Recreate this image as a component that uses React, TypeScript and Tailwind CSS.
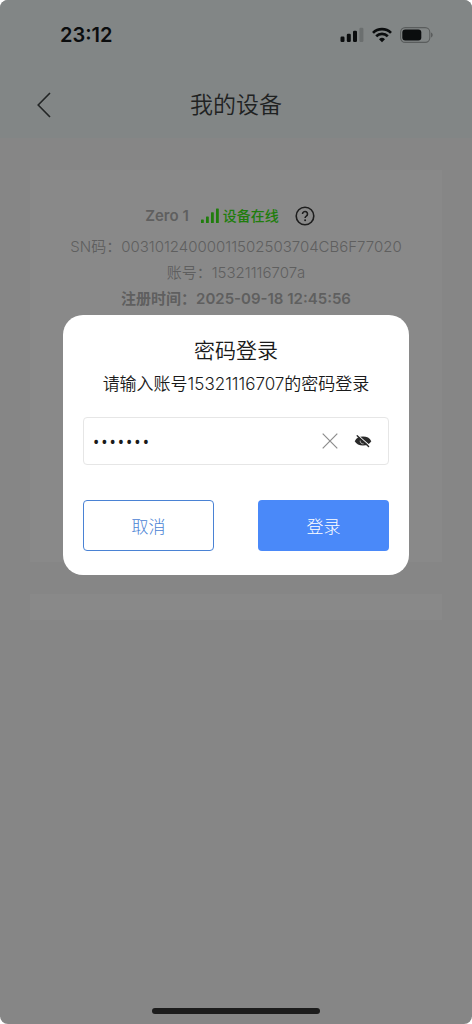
import { useState } from 'react';

function SignalIcon() {
  return (
    <svg width="24" height="16" viewBox="0 0 24 16" fill="#0b0d0e">
      <rect x="0.5" y="9.5" width="4" height="5.5" rx="1.2" />
      <rect x="6.8" y="6.8" width="4" height="8.2" rx="1.2" />
      <rect x="13" y="3.8" width="4" height="11.2" rx="1.2" />
      <rect x="19.4" y="0.8" width="4" height="14.2" rx="1.2" fill="#6b6f6f" />
    </svg>
  );
}

function WifiIcon() {
  return (
    <svg width="20" height="16" viewBox="0 0 20 16" fill="none" stroke="#0b0d0e" strokeWidth="2.7">
      <path d="M1 5.9a12.8 12.8 0 0 1 18 0" />
      <path d="M4.2 9.3a8.3 8.3 0 0 1 11.6 0" />
      <path d="M10 15.3l-3-3a4.3 4.3 0 0 1 6 0z" fill="#0b0d0e" stroke="none" />
    </svg>
  );
}

function BatteryIcon() {
  return (
    <svg width="34" height="16" viewBox="0 0 34 16">
      <rect x="0.6" y="0.6" width="29.2" height="14.8" rx="4.6" fill="none" stroke="#5a5d5d" strokeWidth="1.1" />
      <rect x="2.3" y="2.4" width="19" height="11.2" rx="3" fill="#0b0d0e" />
      <path d="M31 5.6c1.1.4 1.7 1.3 1.7 2.4s-.6 2-1.7 2.4z" fill="#5a5d5d" />
    </svg>
  );
}

function OnlineBars() {
  return (
    <svg width="18" height="16" viewBox="0 0 18 16" fill="#207d0c">
      <rect x="0" y="11.5" width="2.8" height="3.5" rx="0.6" />
      <rect x="5" y="8.4" width="2.8" height="6.6" rx="0.6" />
      <rect x="10" y="4.2" width="2.8" height="10.8" rx="0.6" />
      <rect x="15" y="0.4" width="2.8" height="14.6" rx="0.6" />
    </svg>
  );
}

function EyeOffIcon() {
  return (
    <svg width="18" height="14" viewBox="0 0 18 14">
      <path d="M0.7 7.2C2.2 4 5.2 2.6 9 2.6S15.8 4 17.3 7.2C15.8 10 12.8 11.4 9 11.4S2.2 10 0.7 7.2z" fill="#2a2a2a" />
      <path d="M4.6 1.8L16 11.8" stroke="#fff" strokeWidth="1.1" />
      <path d="M3.2 1.8L14.6 12.4" stroke="#2a2a2a" strokeWidth="1.4" strokeLinecap="round" />
      <path d="M6.2 6.6a2.8 2.8 0 0 0 3.4 3.2" fill="none" stroke="#fff" strokeWidth="0.6" />
    </svg>
  );
}

export default function App() {
  const [password, setPassword] = useState('1234567');
  const [visible, setVisible] = useState(false);

  return (
    <div className="relative flex min-h-screen flex-col overflow-hidden rounded-lg bg-[#868686] font-['Inter','Noto_Sans_CJK_SC',sans-serif]">
      {/* Header */}
      <header className="bg-[#828686] pb-3">
        <div className="flex h-[70px] items-center justify-between pr-[38px] pl-[60px]">
          <span className="text-xl font-semibold text-[#0b0d0e]">23:12</span>
          <div className="flex items-center gap-2">
            <SignalIcon />
            <WifiIcon />
            <BatteryIcon />
          </div>
        </div>
        <div className="grid h-14 grid-cols-[1fr_auto_1fr] items-center px-8 pt-[14px]">
          <button type="button" aria-label="返回" className="flex h-8 w-6 items-center justify-center">
            <svg width="14" height="26" viewBox="0 0 14 26" fill="none" stroke="#222525" strokeWidth="1.6">
              <path d="M13 1L1.2 13L13 25" />
            </svg>
          </button>
          <h1 className="text-[23px] leading-8 font-[350] text-[#1f2222]">我的设备</h1>
        </div>
      </header>

      {/* Dispositivo */}
      <main className="flex flex-col gap-8 px-[30px] pt-8">
        <section className="flex min-h-[392px] flex-col items-center bg-[#898989] pt-8 text-[15px] text-[#5f5f5f]">
          <div className="flex h-7 items-center pr-3">
            <span className="font-semibold">Zero 1</span>
            <span className="ml-3 flex items-center gap-1 text-sm font-medium text-[#207d0c]">
              <OnlineBars />
              设备在线
            </span>
            <button type="button" aria-label="帮助" className="ml-4">
              <svg width="20" height="20" viewBox="0 0 20 20" fill="none" stroke="#1e1e1e" strokeWidth="1.6">
                <circle cx="10" cy="10" r="8.8" />
                <path d="M7.5 8a2.5 2.5 0 1 1 3.8 2.1c-.8.5-1.2.9-1.2 1.9" />
                <circle cx="10.1" cy="14.2" r="1" fill="#1e1e1e" stroke="none" />
              </svg>
            </button>
          </div>
          <p className="mt-1 leading-[26px] font-[350]">SN码：00310124000011502503704CB6F77020</p>
          <p className="leading-[26px] font-[350]">账号：15321116707a</p>
          <p className="leading-[26px] font-semibold">注册时间：2025-09-18 12:45:56</p>
        </section>
        <section className="h-[26px] bg-[#898989]" />
      </main>

      <div className="mt-auto mb-[10px] h-[6px] w-[168px] self-center rounded-full bg-[#1c1c1c]" />

      {/* Modal de senha */}
      <div className="absolute inset-0 flex items-start justify-center px-[63px] pt-[315px]">
        <form
          role="dialog"
          aria-labelledby="login-title"
          onSubmit={e => e.preventDefault()}
          className="w-full max-w-md rounded-[20px] bg-white px-5 pt-5 pb-6 text-[#1a1a1a]"
        >
          <h2 id="login-title" className="text-center text-[21px] leading-8 font-[350]">密码登录</h2>
          <label htmlFor="password" className="mt-1 flex justify-center text-[17px] leading-[26px] font-[350] whitespace-nowrap">
            请输入账号15321116707的密码登录
          </label>

          <div className="mt-5 flex h-12 items-center rounded border border-[#e6e6e6] pr-4 pl-2">
            <input
              id="password"
              type={visible ? 'text' : 'password'}
              value={password}
              onChange={e => setPassword(e.target.value)}
              className="min-w-0 flex-1 font-['Noto_Sans',sans-serif] text-[22px] font-light outline-none"
            />
            <button type="button" aria-label="清除" onClick={() => setPassword('')}>
              <svg width="16" height="16" viewBox="0 0 16 16" stroke="#8c8c8c" strokeWidth="1.2">
                <path d="M0.7 0.7L15.3 15.3M15.3 0.7L0.7 15.3" />
              </svg>
            </button>
            <button type="button" aria-label="显示密码" className="ml-4" onClick={() => setVisible(!visible)}>
              <EyeOffIcon />
            </button>
          </div>

          <div className="mt-[35px] grid grid-cols-2 gap-11 text-[17px] font-light">
            <button type="button" className="h-[51px] rounded border border-[#4a82d4] pt-1 text-[#4a82d4]">取消</button>
            <button type="submit" className="h-[51px] rounded bg-[#4a89f9] pt-1 text-white">登录</button>
          </div>
        </form>
      </div>
    </div>
  );
}
